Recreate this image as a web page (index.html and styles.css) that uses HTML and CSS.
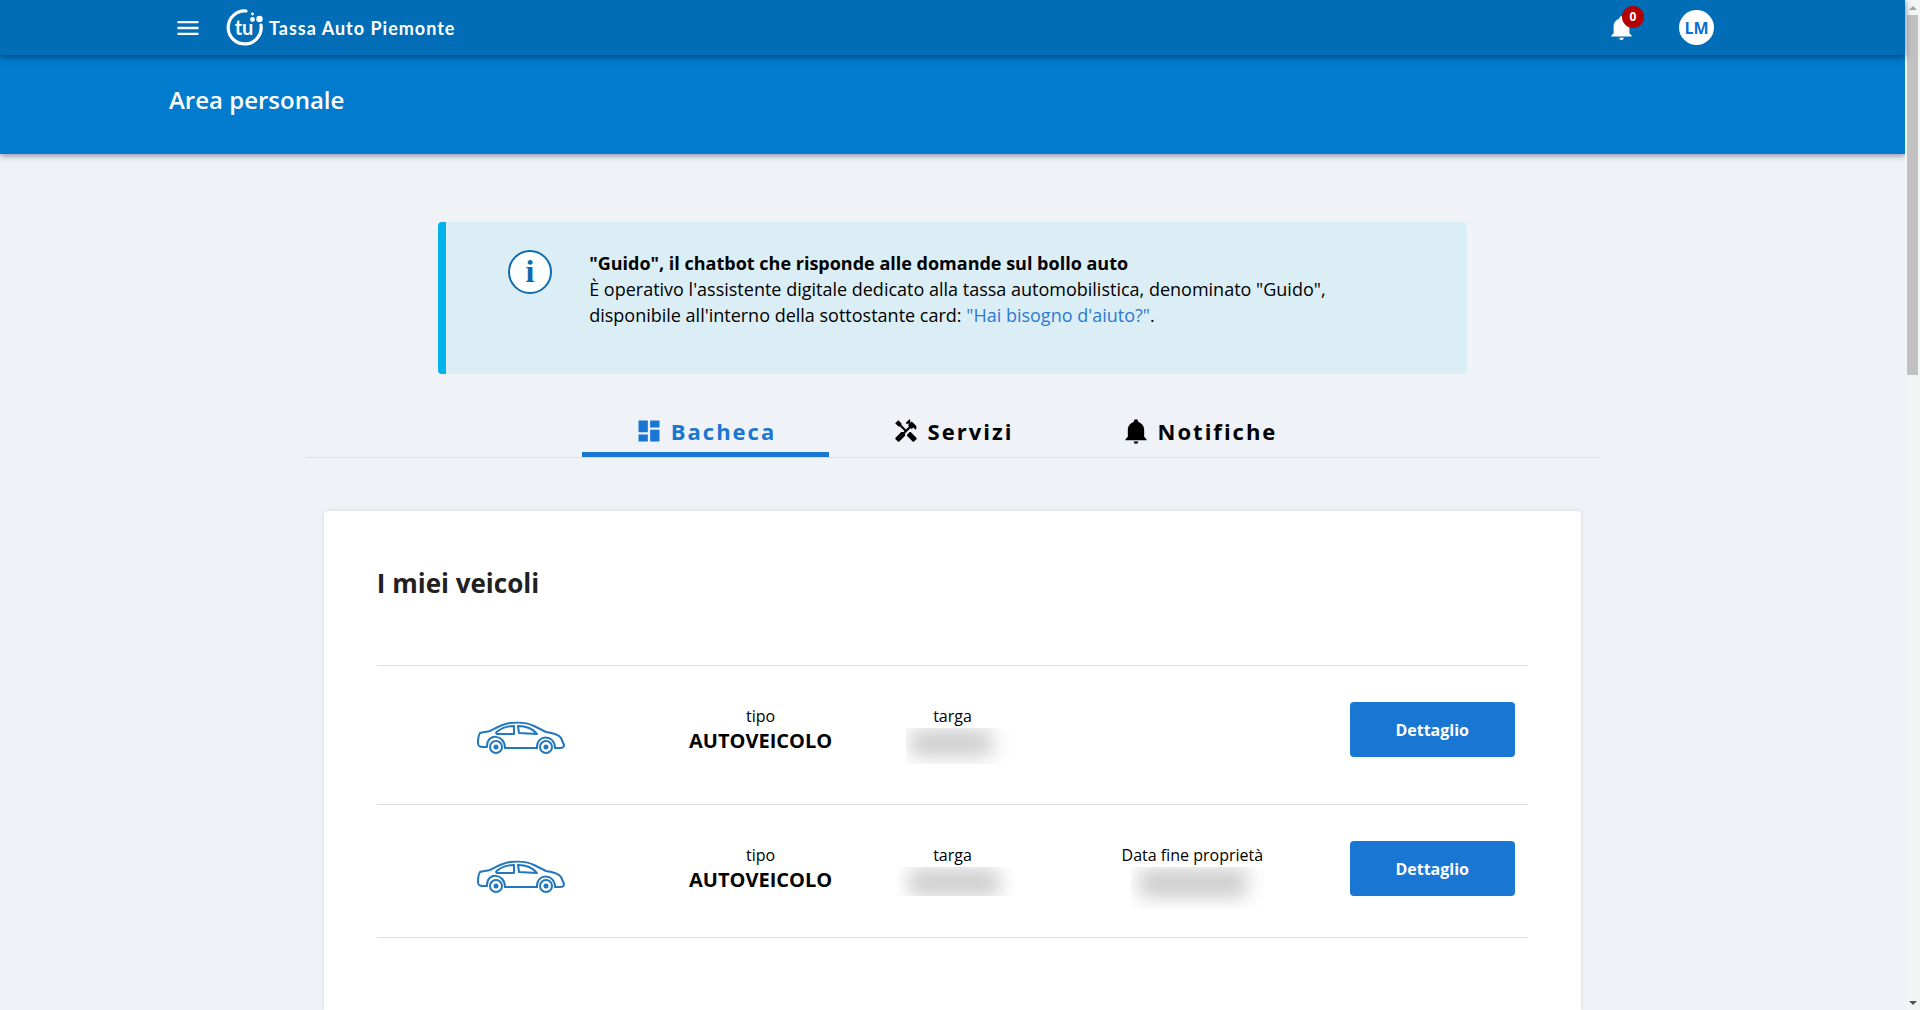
FILE: index.html
```html
<!DOCTYPE html>
<html lang="it">
<head>
<meta charset="utf-8">
<meta name="viewport" content="width=device-width, initial-scale=1">
<title>Tassa Auto Piemonte</title>
<link rel="stylesheet" href="styles.css">
</head>
<body>
<svg class="defs" aria-hidden="true">
  <symbol id="bell" viewBox="0 0 24 24"><path d="M21 19v1H3v-1l2-2v-6c0-3.100 2.030-5.830 5-6.710V4a2 2 0 0 1 4 0v.29c2.970.880 5 3.610 5 6.710v6l2 2m-7 2a2 2 0 0 1-4 0"/></symbol>
  <symbol id="car" viewBox="0 0 90 34">
    <g fill="none" stroke="#2277bd" stroke-width="2" stroke-linejoin="round" stroke-linecap="round">
      <path d="M11 26H7C3 26 2 25 2 22C2 18 2 15 4 12C6 11 10 11 14 10C20 7 26 3 34 2C44 1 52 2 58 5L70 11C77 12 83 14 85 17L88 24C88 26 87 27 84 27H79"/>
      <path d="M29 27H61"/>
      <path d="M11 25C11 12 29 13 29 27M61 27C60 13 79 13 79 27"/>
      <path d="M38 5V13H22C19 13 20 11 22 10C27 6 32 5 38 5Z"/>
      <path d="M42 5C50 5 57 8 61 13L43 12Z"/>
      <circle cx="20" cy="26" r="6"/><circle cx="70" cy="26" r="6"/>
    </g>
    <g fill="#2277bd"><circle cx="20" cy="26" r="2.500"/><circle cx="70" cy="26" r="2.500"/></g>
  </symbol>
</svg>
<div class="window">
  <div class="page">
    <header class="topbar">
      <div class="container topbar-inner">
        <button class="icon-button" type="button" aria-label="Menu">
          <svg width="28" height="28" viewBox="0 0 24 24" fill="currentColor"><path d="M3 18h18v-2H3v2zm0-5h18v-2H3v2zm0-7v2h18V6H3z"/></svg>
        </button>
        <a class="brand" href="#">
          <svg width="40" height="40" viewBox="0 0 40 40" aria-hidden="true">
            <path d="M21 3A16.500 16.500 0 1 0 36 17" fill="none" stroke="#fff" stroke-width="3.200" stroke-linecap="round"/>
            <circle cx="34.500" cy="11" r="3.200" fill="#fff"/><circle cx="27.500" cy="11.500" r="2.400" fill="#fff"/><circle cx="27.500" cy="6" r="1.400" fill="#fff"/>
            <text class="brand-mark" x="19" y="27" text-anchor="middle">tu</text>
          </svg>
          <span>Tassa Auto Piemonte</span>
        </a>
        <button class="icon-button bell-button" type="button" aria-label="Notifiche">
          <svg width="27" height="27" fill="currentColor"><use href="#bell"/></svg>
          <span class="badge">0</span>
        </button>
        <button class="avatar" type="button">LM</button>
      </div>
    </header>
    <div class="titlebar"><div class="container"><h1>Area personale</h1></div></div>
    <main>
      <section class="notice">
        <svg class="notice-icon" width="44" height="44" viewBox="0 0 44 44" aria-hidden="true">
          <circle cx="22" cy="22" r="21" fill="#fcfeff" stroke="#0a6ab0" stroke-width="2"/>
          <text class="notice-mark" x="22" y="32" text-anchor="middle">i</text>
        </svg>
        <div>
          <h2>"Guido", il chatbot che risponde alle domande sul bollo auto</h2>
          <p>È operativo l'assistente digitale dedicato alla tassa automobilistica, denominato "Guido", disponibile all'interno della sottostante card: <a href="#">"Hai bisogno d'aiuto?"</a>.</p>
        </div>
      </section>
      <nav class="tabs">
        <a class="tab active" href="#"><svg width="28" height="28" viewBox="0 0 24 24" fill="currentColor"><path d="M3 13h8V3H3v10zm0 8h8v-6H3v6zm10 0h8V11h-8v10zm0-18v6h8V3h-8z"/></svg>Bacheca</a>
        <a class="tab" href="#"><svg width="28" height="28" viewBox="-1 -1 26 26" fill="currentColor"><path d="M21.670 18.170l-5.300-5.300h-.99l-2.540 2.540v.99l5.300 5.300c.39.390 1.020.390 1.410 0l2.120-2.120c.39-.38.39-1.020 0-1.410z"/><path d="M17.340 10.190l1.410-1.410 2.120 2.120c1.170-1.170 1.170-3.070 0-4.240l-3.540-3.540-1.410 1.410V1.710L15.220 1l-3.540 3.540.71.710h2.830l-1.410 1.410 1.060 1.060-2.890 2.890-4.130-4.130V5.060L4.830 2.040 2 4.870 5.030 7.900h1.410l4.130 4.130-.85.850H7.600l-5.300 5.300c-.39.390-.39 1.020 0 1.410l2.120 2.120c.39.390 1.020.390 1.410 0l5.300-5.300v-2.120l5.150-5.150 1.060 1.050z"/></svg>Servizi</a>
        <a class="tab" href="#"><svg width="28" height="28" fill="currentColor"><use href="#bell"/></svg>Notifiche</a>
      </nav>
      <section class="card">
        <h2>I miei veicoli</h2>
        <ul class="vehicles">
          <li class="vehicle">
            <svg class="car" width="90" height="34"><use href="#car"/></svg>
            <div class="field">tipo<strong>AUTOVEICOLO</strong></div>
            <div class="field">targa<span class="hidden-value plate"></span></div>
            <div></div>
            <button class="detail" type="button">Dettaglio</button>
          </li>
          <li class="vehicle">
            <svg class="car" width="90" height="34"><use href="#car"/></svg>
            <div class="field">tipo<strong>AUTOVEICOLO</strong></div>
            <div class="field">targa<span class="hidden-value plate-short"></span></div>
            <div class="field">Data fine proprietà<span class="hidden-value date"></span></div>
            <button class="detail" type="button">Dettaglio</button>
          </li>
        </ul>
      </section>
    </main>
  </div>
  <div class="scrollbar" aria-hidden="true">
    <span class="arrow up"></span><span class="thumb"></span><span class="arrow down"></span>
  </div>
</div>
</body>
</html>
```
FILE: styles.css
```css
* { box-sizing: border-box; }
body {
  margin: 0;
  background: #eff3f8;
  color: #000;
  font-family: "Open Sans", "Noto Sans", sans-serif;
}
h1, h2, p, ul { margin: 0; padding: 0; }
button { border: 0; padding: 0; font-family: inherit; cursor: pointer; }
a { text-decoration: none; }
.defs { display: none; }

.window { display: flex; min-height: 100vh; }
.page { flex: 1; min-width: 0; display: flex; flex-direction: column; }
.container { width: 100%; max-width: 1567px; margin: 0 auto; }

.topbar {
  position: relative;
  z-index: 1;
  background: #006db6;
  box-shadow: 0 2px 6px rgba(0, 30, 70, 0.6);
}
.topbar-inner { display: flex; align-items: center; height: 55px; padding: 0 22px 0 5px; }
.icon-button { display: grid; place-items: center; background: none; color: #fff; }
.brand {
  display: flex;
  align-items: center;
  gap: 4px;
  margin-left: 23px;
  color: #fff;
  font: bold 18px/24px Lato, sans-serif;
  letter-spacing: 1px;
}
.brand-mark { font: bold 20px Lato, sans-serif; letter-spacing: 0; fill: #fff; }
.bell-button { position: relative; margin: 0 44px 0 auto; }
.badge {
  position: absolute;
  top: -8px;
  right: -9px;
  width: 22px;
  border-radius: 50%;
  background: #b50000;
  font-size: 12px;
  font-weight: 700;
  line-height: 22px;
  text-align: center;
}
.avatar {
  width: 35px;
  height: 35px;
  border-radius: 50%;
  background: #fff;
  color: #0b70d2;
  font-size: 16px;
  font-weight: 700;
}
.titlebar {
  height: 99px;
  padding-top: 29px;
  background: #007bcd;
  color: #fff;
  box-shadow: 0 2px 6px rgba(0, 0, 40, 0.4);
}
.titlebar h1 { font-size: 24px; font-weight: 600; line-height: 32px; }

main { flex: 1; display: flex; flex-direction: column; align-items: center; padding-top: 68px; }
.notice {
  display: flex;
  gap: 37px;
  width: 54%;
  min-height: 152px;
  padding: 28px 128px 28px 62px;
  border-left: 8px solid #00b3ea;
  border-radius: 4px;
  background: #dbeef5;
  font-size: 18px;
  line-height: 26px;
}
.notice-icon { flex: none; }
.notice-mark { font: bold 32px "Liberation Serif", serif; fill: #0a6ab0; }
.notice h2 { font-size: 18px; font-weight: 700; }
.notice a { color: #2b7bd0; }

.tabs {
  display: flex;
  justify-content: center;
  width: 68%;
  margin-top: 32px;
  border-bottom: 1px solid #dbe0e6;
}
.tab {
  display: flex;
  justify-content: center;
  align-items: center;
  gap: 8px;
  width: 247px;
  height: 51px;
  padding-top: 3px;
  border-bottom: 5px solid transparent;
  color: #000;
  font-size: 22px;
  font-weight: 700;
  letter-spacing: 2px;
}
.tab.active { color: #1976d2; border-color: #1976d2; }

.card {
  flex: 1;
  width: 66%;
  margin-top: 53px;
  padding: 52px 53px 72px;
  border-radius: 4px 4px 0 0;
  background: #fff;
  box-shadow: 0 0 4px rgba(0, 0, 0, 0.12);
}
.card h2 { color: #212121; font-size: 26px; font-weight: 700; line-height: 40px; }
.vehicles { margin-top: 62px; border-top: 1px solid #dcdcdc; list-style: none; }
.vehicle {
  display: grid;
  grid-template-columns: 3fr 2fr 2fr 3fr 2fr;
  justify-items: center;
  align-items: start;
  padding: 36px 0 41px;
  border-bottom: 1px solid #dcdcdc;
}
.vehicle:first-child { padding-bottom: 47px; }
.car { margin-top: 19px; }
.field {
  display: flex;
  flex-direction: column;
  align-items: center;
  height: 55px;
  padding-top: 2px;
  font-size: 16px;
  line-height: 24px;
}
.field strong { font-size: 20px; line-height: 26px; }
.hidden-value { flex: none; overflow: hidden; }
.hidden-value::before {
  content: "";
  display: block;
  background: #cbcbcb;
  filter: blur(10px);
}
.plate { width: 104px; height: 36px; margin-left: 12px; padding: 2px 18px 0 4px; }
.plate::before { height: 26px; }
.plate-short { width: 118px; height: 29px; margin-left: 8px; padding: 2px 16px 0 12px; }
.plate-short::before { height: 27px; }
.date { width: 134px; height: 42px; margin-left: 12px; padding: 2px 18px 0 8px; }
.date::before { height: 28px; }
.detail {
  width: 165px;
  max-width: 90%;
  height: 55px;
  border-radius: 4px;
  background: #1976d2;
  color: #fff;
  font-size: 16px;
  font-weight: 700;
}

.scrollbar {
  flex: none;
  display: flex;
  flex-direction: column;
  align-items: center;
  width: 15px;
  padding: 6px 0 5px;
  background: #f3f4f4;
}
.arrow { border: 4px solid transparent; }
.up { border-top: 0; border-bottom-color: #a3a3a3; }
.down { border-bottom: 0; border-top-color: #505050; margin-top: auto; }
.thumb { width: 11px; height: 36%; margin-top: 5px; background: #c1c1c1; }
```
